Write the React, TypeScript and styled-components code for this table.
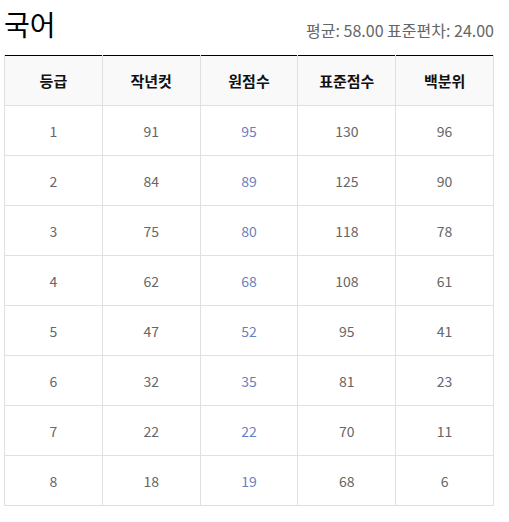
import React from "react";
import styled, { createGlobalStyle } from "styled-components";

const GlobalStyle = createGlobalStyle`
	body {
		margin: 0;
		background: #fff;
		font-family: "Noto Sans CJK KR", "Noto Sans", sans-serif;
	}
`;

const rows = [
	[1, 91, 95, 130, 96],
	[2, 84, 89, 125, 90],
	[3, 75, 80, 118, 78],
	[4, 62, 68, 108, 61],
	[5, 47, 52, 95, 41],
	[6, 32, 35, 81, 23],
	[7, 22, 22, 70, 11],
	[8, 18, 19, 68, 6],
];

const headers = ["등급", "작년컷", "원점수", "표준점수", "백분위"];

export default function App() {
	return (
		<>
			<GlobalStyle />
			<Wrap>
				<TitleRow>
					<Title>국어</Title>
					<Stats>평균: 58.00 표준편차: 24.00</Stats>
				</TitleRow>
				<Table>
					<thead>
						<tr>
							{headers.map((h) => (
								<Th key={h}>{h}</Th>
							))}
						</tr>
					</thead>
					<tbody>
						{rows.map((r) => (
							<tr key={r[0]}>
								{r.map((v, i) => (
									<Td key={i} $blue={i === 2}>
										{v}
									</Td>
								))}
							</tr>
						))}
					</tbody>
				</Table>
			</Wrap>
		</>
	);
}

const Wrap = styled.div`
	width: 490px;
	margin-left: 4px;
`;

const TitleRow = styled.div`
	display: flex;
	justify-content: space-between;
	align-items: flex-end;
	height: 55px;
	padding-bottom: 17px;
	box-sizing: border-box;
`;

const Title = styled.h1`
	margin: 0;
	font-size: 28px;
	font-weight: 400;
	line-height: 1;
	color: #000;
`;

const Stats = styled.span`
	font-size: 16px;
	color: #666;
	line-height: 1;
`;

const Table = styled.table`
	width: 490px;
	border-collapse: collapse;
	border-top: 1px solid #000;
	table-layout: fixed;
`;

const Th = styled.th`
	height: 49px;
	padding: 0;
	background: #f9f9f9;
	border: 1px solid #e0e0e0;
	border-top: none;
	font-size: 15px;
	font-weight: 700;
	color: #111;
	text-align: center;
`;

const Td = styled.td<{ $blue?: boolean }>`
	height: 49px;
	padding: 0;
	border: 1px solid #e0e0e0;
	font-size: 14px;
	color: ${(p) => (p.$blue ? "#6b7fc0" : "#666")};
	text-align: center;
`;
